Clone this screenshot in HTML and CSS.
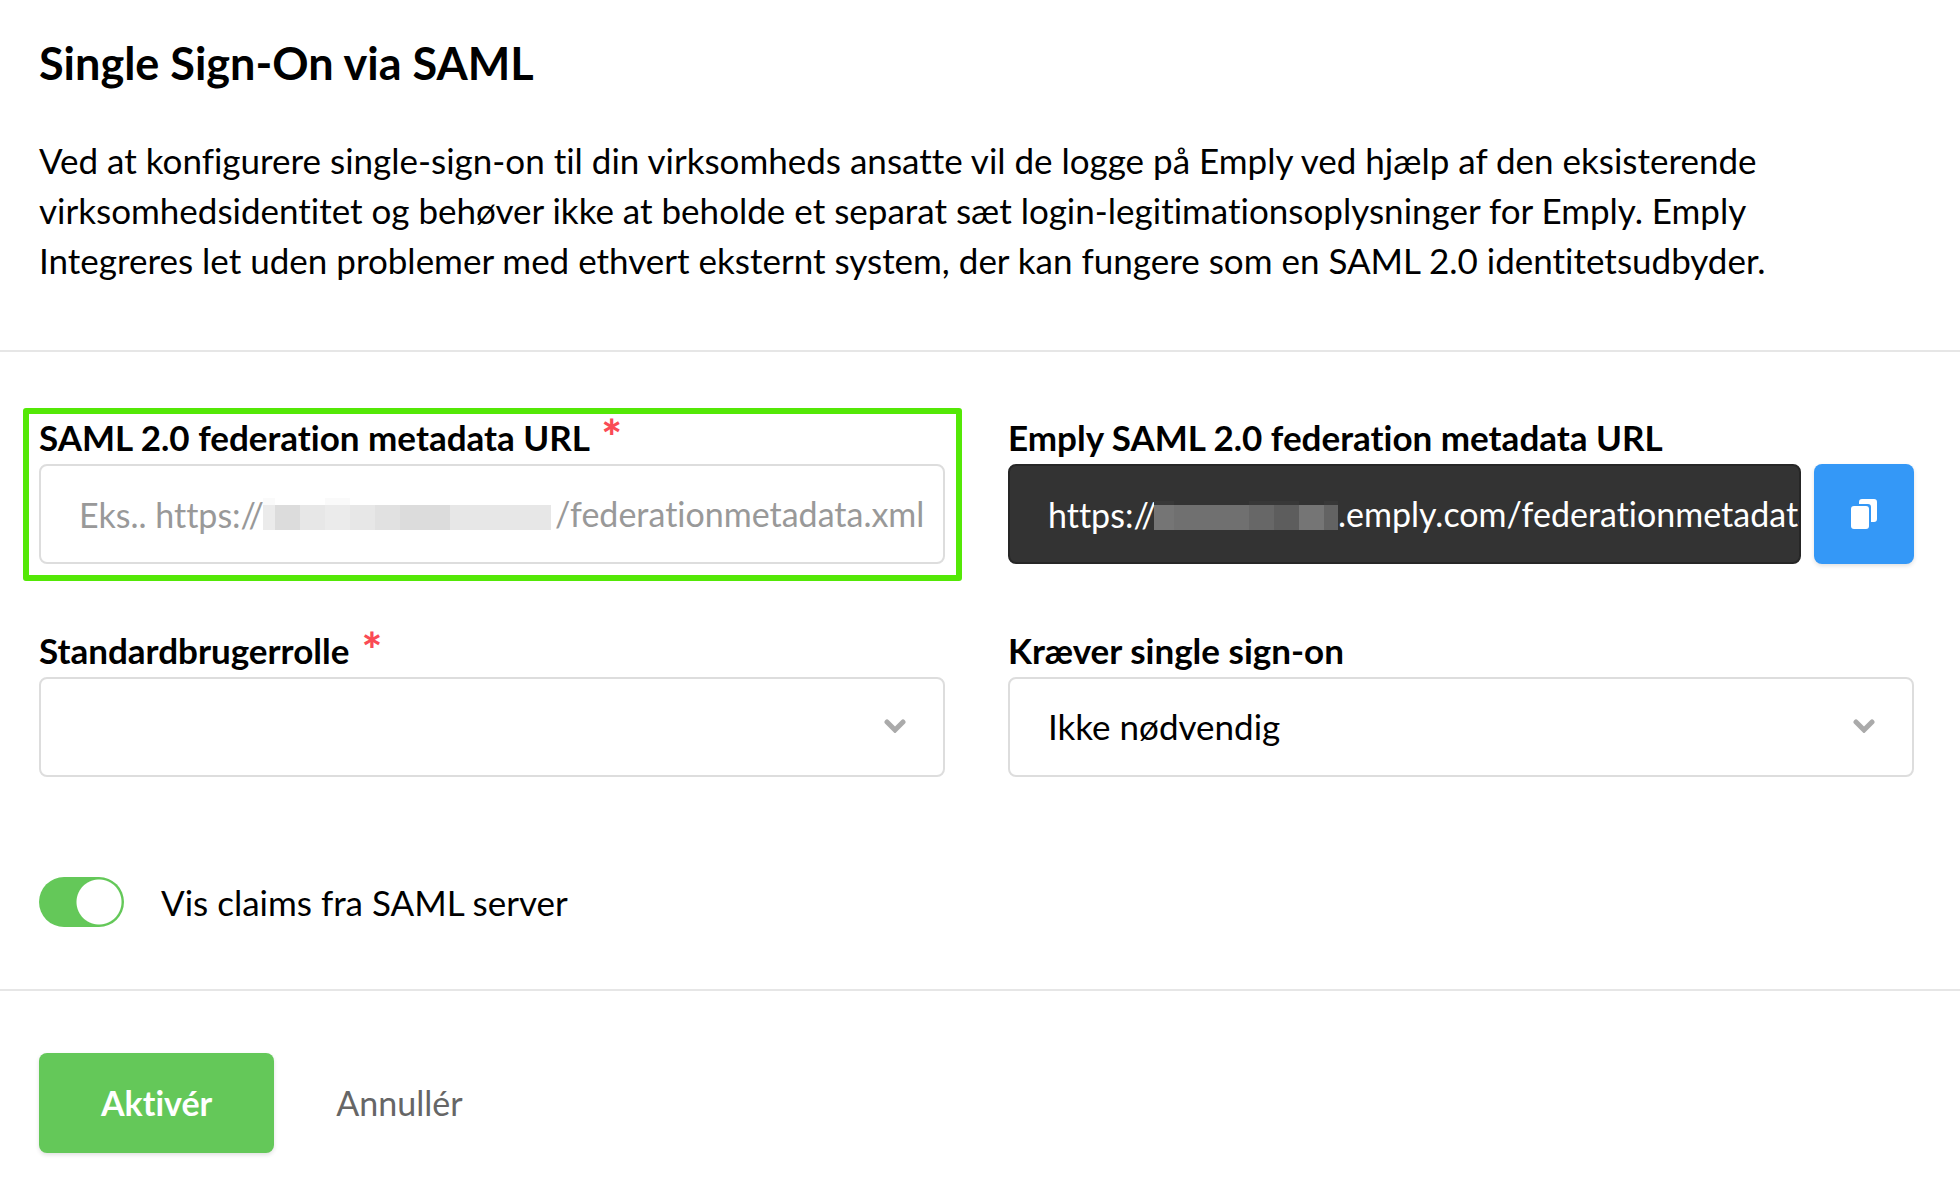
FILE: index.html
```html
<!DOCTYPE html>
<html lang="da">
<head>
    <meta charset="UTF-8">
    <meta name="viewport" content="width=device-width, initial-scale=1.0">
    <title>Single Sign-On via SAML</title>
    <link rel="stylesheet" href="styles.css">
</head>
<body>

    <header class="intro">
        <h1>Single Sign-On via SAML</h1>
        <p>Ved at konfigurere single-sign-on til din virksomheds ansatte vil de logge på Emply ved hjælp af den eksisterende virksomhedsidentitet og behøver ikke at beholde et separat sæt login-legitimationsoplysninger for Emply. Emply Integreres let uden problemer med ethvert eksternt system, der kan fungere som en SAML 2.0 identitetsudbyder.</p>
    </header>

    <form id="samlForm">
        <div class="fields">
            <div class="field highlight">
                <label for="metadataUrl">SAML 2.0 federation metadata URL <span class="required">*</span></label>
                <div class="control">
                    <input type="text" id="metadataUrl" class="example" placeholder="Eks.. https://">
                    <svg class="mask" width="288" height="32" viewBox="0 0 288 32" shape-rendering="crispEdges" aria-hidden="true">
                        <path fill="#fafafa" d="M0 0h12v7H0zM62 0h25v7H62z"/>
                        <path fill="#e7e7e7" d="M0 7h288v25H0z"/>
                        <path fill="#ebebeb" d="M0 7h12v25H0zM62 7h25v25H62z"/>
                        <path fill="#dcdcdc" d="M12 7h25v25H12zM137 7h50v25h-50z"/>
                        <path fill="#e1e1e1" d="M112 7h25v25h-25z"/>
                    </svg>
                    <span class="hint">/federationmetadata.xml</span>
                </div>
            </div>

            <div class="field">
                <label for="emplyUrl">Emply SAML 2.0 federation metadata URL</label>
                <div class="copy-row">
                    <div class="control dark">
                        <input type="text" id="emplyUrl" class="host" value="https://" readonly>
                        <svg class="mask" width="184" height="32" viewBox="0 0 184 32" shape-rendering="crispEdges" aria-hidden="true">
                            <path fill="#383838" d="M0 3h20v4H0zM95 3h50v4H95zM170 3h14v4h-14z"/>
                            <path fill="#707070" d="M0 7h184v25H0z"/>
                            <path fill="#757575" d="M0 7h20v25H0zM145 7h25v25h-25z"/>
                            <path fill="#676767" d="M95 7h25v25H95z"/>
                            <path fill="#5d5d5d" d="M120 7h25v25h-25z"/>
                            <path fill="#636363" d="M170 7h14v25h-14z"/>
                        </svg>
                        <span>.emply.com/federationmetadata.xml</span>
                    </div>
                    <button type="button" id="copyButton" class="copy" aria-label="Kopiér">
                        <svg width="26" height="30" viewBox="0 0 26 30" aria-hidden="true">
                            <rect x="0" y="7" width="18" height="23" rx="3" fill="#fff"/>
                            <path fill="#fff" d="M8 3Q8 0 11 0H23Q26 0 26 3V20Q26 23 23 23H20V8Q20 5 17 5H8z"/>
                        </svg>
                    </button>
                </div>
            </div>

            <div class="field">
                <label for="defaultRole">Standardbrugerrolle <span class="required">*</span></label>
                <div class="select">
                    <select id="defaultRole">
                        <option value=""></option>
                    </select>
                    <svg class="chevron" width="22" height="14" viewBox="0 0 22 14" aria-hidden="true"><path d="M3 3l8 8 8-8"/></svg>
                </div>
            </div>

            <div class="field">
                <label for="requireSso">Kræver single sign-on</label>
                <div class="select">
                    <select id="requireSso">
                        <option>Ikke nødvendig</option>
                    </select>
                    <svg class="chevron" width="22" height="14" viewBox="0 0 22 14" aria-hidden="true"><path d="M3 3l8 8 8-8"/></svg>
                </div>
            </div>

            <div class="toggle">
                <input type="checkbox" id="showClaims" checked>
                <label for="showClaims">Vis claims fra SAML server</label>
            </div>
        </div>

        <div class="actions">
            <button type="submit" class="primary">Aktivér</button>
            <button type="button" class="cancel">Annullér</button>
        </div>
    </form>

</body>
</html>
```
FILE: styles.css
```css
* {
    box-sizing: border-box;
}
body {
    margin: 0;
    background-color: #fff;
    color: #000;
    font-family: Lato, sans-serif;
    font-size: 35px;
    line-height: 50px;
    font-variant-ligatures: none;
}
input, select, button {
    margin: 0;
    padding: 0;
    border: none;
    background: none;
    color: inherit;
    font: inherit;
    font-variant-ligatures: none;
}
.intro {
    padding: 36px 46px 65px 39px;
    border-bottom: 2px solid #e6e6e6;
}
h1 {
    margin: 0 0 45px;
    font-size: 45px;
    font-weight: 700;
    line-height: 54px;
}
.intro p {
    max-width: 1780px;
    margin: 0;
}
.fields {
    display: grid;
    grid-template-columns: 1fr 1fr;
    column-gap: 63px;
    row-gap: 63px;
    padding: 62px 46px 62px 39px;
    border-bottom: 2px solid #e6e6e6;
}
.field {
    position: relative;
    min-width: 0;
}
.field label {
    display: block;
    margin-bottom: 4px;
    font-weight: 700;
    line-height: 46px;
}
.required {
    margin-left: 4px;
    color: #fa4b55;
    font-size: 48px;
    font-weight: 900;
    line-height: 1px;
    vertical-align: -4px;
}
/* Green frame around the field that has to be filled in */
.highlight::before {
    content: "";
    position: absolute;
    inset: -6px -17px -17px -16px;
    border: 6px solid #54e806;
    border-radius: 3px;
    pointer-events: none;
}
.control {
    display: flex;
    align-items: center;
    flex: 1;
    min-width: 0;
    height: 100px;
    padding-left: 38px;
    border: 2px solid #ddd;
    border-radius: 8px;
    overflow: hidden;
    font-size: 34px;
    white-space: nowrap;
}
.control input {
    flex: none;
    height: 96px;
    outline: none;
}
.control input::placeholder {
    color: #999;
    opacity: 1;
}
.example {
    width: 184px;
}
.host {
    width: 106px;
}
.mask {
    flex: none;
}
.hint {
    margin-left: 4px;
    color: #999;
}
.dark {
    background-color: #333;
    border-color: #262626;
    color: #fff;
}
.copy-row {
    display: flex;
    gap: 13px;
}
.copy {
    display: flex;
    align-items: center;
    justify-content: center;
    width: 100px;
    height: 100px;
    border-radius: 8px;
    background-color: #3498f7;
    box-shadow: 0 2px 4px rgba(0, 0, 0, 0.12);
    cursor: pointer;
}
.select {
    position: relative;
}
.select select {
    display: block;
    width: 100%;
    height: 100px;
    padding: 0 80px 2px 38px;
    border: 2px solid #ddd;
    border-radius: 8px;
    appearance: none;
}
.chevron {
    position: absolute;
    top: 42px;
    right: 39px;
    fill: none;
    stroke: #aaa;
    stroke-width: 5;
    stroke-linecap: round;
    pointer-events: none;
}
.toggle {
    grid-column: 1 / -1;
    display: flex;
    align-items: center;
    gap: 37px;
    padding-top: 37px;
}
.toggle input {
    width: 85px;
    height: 50px;
    border-radius: 25px;
    background: radial-gradient(circle at 60px 25px, #fff 22px, #64c859 23px);
    appearance: none;
    cursor: pointer;
}
.actions {
    display: flex;
    gap: 62px;
    padding: 62px 39px 26px;
}
.actions button {
    height: 100px;
    font-size: 34px;
    cursor: pointer;
}
.primary {
    padding: 0 62px;
    border-radius: 8px;
    background-color: #64c859;
    box-shadow: 0 2px 4px rgba(0, 0, 0, 0.12);
}
.actions .primary {
    color: #fff;
    font-weight: 700;
}
.cancel {
    color: #666;
}
```
